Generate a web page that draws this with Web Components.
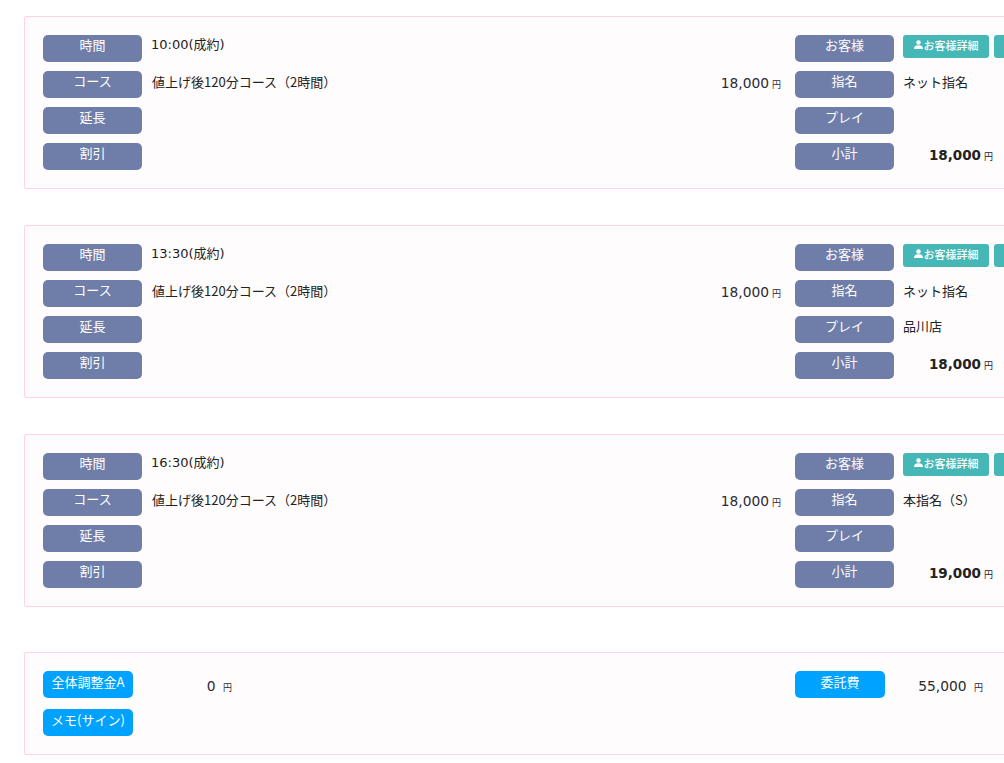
<!DOCTYPE html>
<html lang="ja"><head><meta charset="utf-8"><title>予約</title>
<style>
html,body{margin:0;padding:0;background:#fff;overflow:hidden;height:763px}
body{font-family:"DejaVu Sans","Noto Sans CJK JP",sans-serif;font-size:13px;color:#222}
#page{display:flex;flex-direction:column;width:1120px;padding:16px 0 0 24px}
.tm{font-family:"DejaVu Sans","Noto Sans CJK JP",sans-serif;font-size:13px}
</style></head><body>
<template id="t-tag"><style>
:host{display:block;width:99px;height:27px;box-sizing:border-box;border-radius:5px;background:#6f7ea9;color:#fff;text-align:center;font:13px/20px "Noto Sans CJK JP",sans-serif}
:host([kind=blue]){background:#00a2ff;width:90px;line-height:22px}
</style><slot></slot></template>
<template id="t-yen"><style>
:host{display:block;text-align:right;font:13.8px/22px "DejaVu Sans","Noto Sans CJK JP",sans-serif;color:#2b2b33;white-space:nowrap}
:host([bold]){font-weight:bold;font-size:13.5px;color:#222}
small{font:9px "Noto Sans CJK JP",sans-serif;margin-left:3px}
</style><slot></slot><small>円</small></template>
<template id="t-btn"><style>
:host{display:inline-flex;align-items:center;justify-content:center;width:86px;height:23px;box-sizing:border-box;background:#45b7b6;color:#fff;border-radius:3px;font:500 11px/20px "Noto Sans CJK JP",sans-serif;white-space:nowrap;padding-bottom:4px}
svg{width:9px;height:9px;margin-right:1px;fill:#fff}
</style><svg viewBox="0 0 16 16"><circle cx="8" cy="4.5" r="4"/><path d="M0 16c0-5 3-6.500 8-6.500s8 1.500 8 6.500z"/></svg><slot></slot></template>
<template id="t-row"><style>
:host{display:block;height:173px;box-sizing:border-box;margin-bottom:36px;border:1px solid #ffd2e8;border-radius:2px;background:#fffcfd;padding:18px}
.g{display:grid;grid-template-columns:99px 653px 99px 1fr;grid-template-rows:repeat(4,27px);row-gap:9px}
.v{margin-left:9px;font:13px/20px "Noto Sans CJK JP",sans-serif;color:#222;white-space:nowrap}
.t{margin-top:-1px}
.d{margin-top:1px}
.c{display:flex;justify-content:space-between;margin-right:14px;margin-top:1px;padding-left:1px}
.r{display:flex;gap:5px;margin-left:9px}
.s{width:90px;margin-left:9px;margin-top:1px}
</style><div class="g">
<x-tag>時間</x-tag><div class="v t"><slot name="time"></slot></div><x-tag>お客様</x-tag><div class="r"><x-btn>お客様詳細</x-btn><x-btn></x-btn></div>
<x-tag>コース</x-tag><div class="v c"><slot name="course"></slot><x-yen>18,000</x-yen></div><x-tag>指名</x-tag><div class="v d"><slot name="nom"></slot></div>
<x-tag>延長</x-tag><div class="v"></div><x-tag>プレイ</x-tag><div class="v"><slot name="play"></slot></div>
<x-tag>割引</x-tag><div class="v"></div><x-tag>小計</x-tag><div class="s"><x-yen bold><slot name="sub"></slot></x-yen></div>
</div></template>
<template id="t-foot"><style>
:host{display:block;height:103px;box-sizing:border-box;margin-top:9px;border:1px solid #ffd2e8;border-radius:2px;background:#fffcfd;padding:18px}
.g{display:grid;grid-template-columns:90px 99px 563px 90px 1fr;grid-template-rows:27px 27px;row-gap:11px}
.n{padding-top:4px}
.w{width:90px;margin-left:8px;padding-top:4px}
</style><div class="g">
<x-tag kind="blue">全体調整金A</x-tag><x-yen class="n">0&nbsp;</x-yen><div></div><x-tag kind="blue">委託費</x-tag><x-yen class="w">55,000&nbsp;</x-yen>
<x-tag kind="blue">メモ(サイン)</x-tag>
</div></template>
<div id="page">
<x-row><span slot="time" class="tm">10:00(成約)</span><span slot="course">値上げ後120分コース（2時間）</span><span slot="nom">ネット指名</span><span slot="sub">18,000</span></x-row>
<x-row><span slot="time" class="tm">13:30(成約)</span><span slot="course">値上げ後120分コース（2時間）</span><span slot="nom">ネット指名</span><span slot="play">品川店</span><span slot="sub">18,000</span></x-row>
<x-row><span slot="time" class="tm">16:30(成約)</span><span slot="course">値上げ後120分コース（2時間）</span><span slot="nom">本指名（S）</span><span slot="sub">19,000</span></x-row>
<x-foot></x-foot>
</div>
<script>
for(const [n,id] of [['x-tag','t-tag'],['x-yen','t-yen'],['x-btn','t-btn'],['x-row','t-row'],['x-foot','t-foot']]){
customElements.define(n,class extends HTMLElement{constructor(){super();this.attachShadow({mode:'open'}).appendChild(document.getElementById(id).content.cloneNode(true));}});
}
</script>
</body></html>
